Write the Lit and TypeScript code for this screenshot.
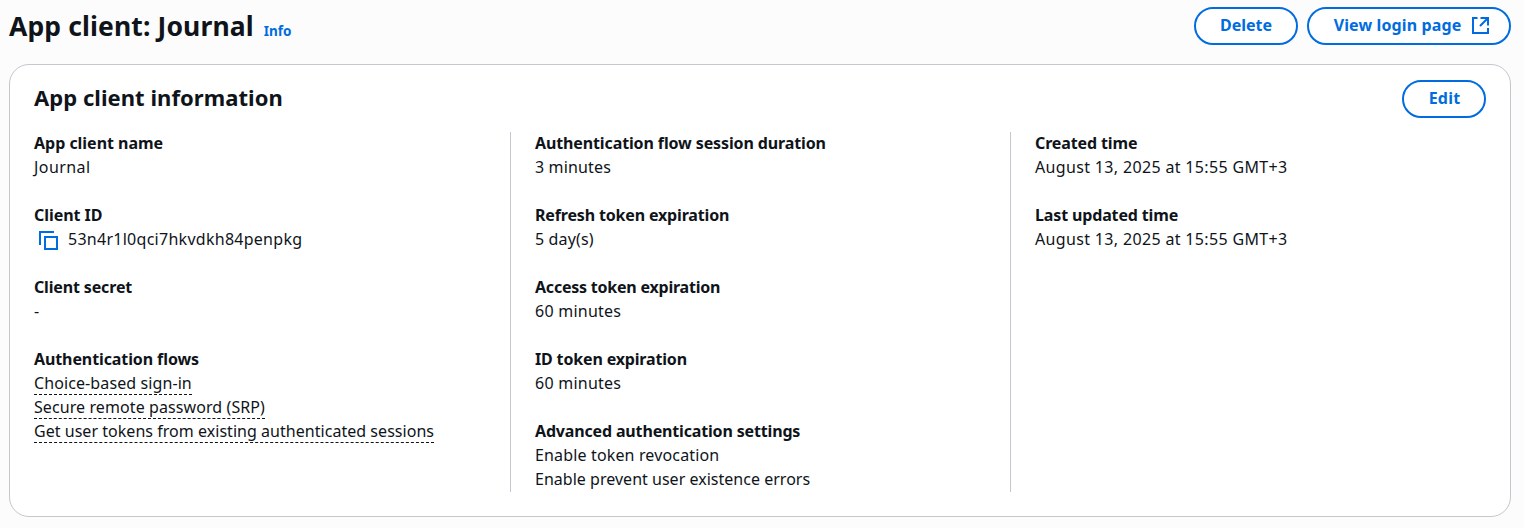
import { LitElement, html, css } from "lit";

type Run = [text: string, tracking: number];
interface Field {
  label: Run;
  values: Run[];
  kind?: "copy" | "hint";
}

const columns: Field[][] = [
  [
    { label: ["App client name", -0.02], values: [["Journal", 0.42]] },
    { label: ["Client ID", -0.05], values: [["53n4r1l0qci7hkvdkh84penpkg", 0.27]], kind: "copy" },
    { label: ["Client secret", -0.15], values: [["-", 0]] },
    {
      label: ["Authentication flows", -0.1],
      values: [
        ["Choice-based sign-in", 0.1],
        ["Secure remote password (SRP)", 0.09],
        ["Get user tokens from existing authenticated sessions", 0.035],
      ],
      kind: "hint",
    },
  ],
  [
    { label: ["Authentication flow session duration", -0.12], values: [["3 minutes", 0.15]] },
    { label: ["Refresh token expiration", -0.16], values: [["5 day(s)", 0.15]] },
    { label: ["Access token expiration", -0.22], values: [["60 minutes", 0.24]] },
    { label: ["ID token expiration", -0.16], values: [["60 minutes", 0.24]] },
    {
      label: ["Advanced authentication settings", -0.16],
      values: [["Enable token revocation", 0.15], ["Enable prevent user existence errors", 0.02]],
    },
  ],
  [
    { label: ["Created time", -0.12], values: [["August 13, 2025 at 15:55 GMT+3", 0.34]] },
    { label: ["Last updated time", -0.14], values: [["August 13, 2025 at 15:55 GMT+3", 0.34]] },
  ],
];

const run = ([text, tracking]: Run, cls = "") =>
  html`<span class=${cls} style=${`letter-spacing:${tracking}px`}>${text}</span>`;

class AppRoot extends LitElement {
  static styles = css`
    :host {
      display: flex;
      flex-direction: column;
      box-sizing: border-box;
      height: 528px;
      padding: 7px 13px 11px 9px;
      background: #fcfcfd;
      color: #0f141a;
      font: 400 16px/24px "Noto Sans", sans-serif;
      white-space: nowrap;
      overflow: hidden;
    }
    .top { display: flex; justify-content: space-between; height: 57px; }
    .heading { display: flex; align-items: baseline; gap: 10px; height: 38px; }
    h1, h2 { margin: 0; font-weight: 700; }
    h1 { font-size: 26.5px; line-height: 38px; letter-spacing: 0.12px; }
    h2 { font-size: 22px; line-height: 34px; letter-spacing: 0.05px; }
    .info { color: #006ce0; font-size: 13.5px; font-weight: 700; }
    .actions { display: flex; gap: 9px; }
    button {
      display: flex;
      align-items: center;
      justify-content: center;
      gap: 11px;
      box-sizing: border-box;
      height: 38px;
      padding: 0 0 2px;
      border: 2px solid #006ce0;
      border-radius: 20px;
      background: #fff;
      color: #006ce0;
      font: 700 16px/24px "Noto Sans", sans-serif;
    }
    .delete { width: 104px; }
    .login { width: 204px; padding-left: 5px; }
    .edit { width: 84px; padding-left: 1px; letter-spacing: 0.2px; }
    .external { width: 17px; height: 17px; margin-top: 1px; }
    .card {
      flex: 1;
      box-sizing: border-box;
      padding: 15px 24px 0;
      border: 1px solid #c6c6cd;
      border-radius: 20px;
      background: #fff;
    }
    .cardhead { display: flex; justify-content: space-between; height: 52px; }
    .columns { display: grid; grid-template-columns: 476px 500px 1fr; height: 360px; }
    .column { display: flex; flex-direction: column; gap: 24px; }
    .column + .column { border-left: 1px solid #c6c6cd; padding-left: 24px; }
    .label { display: block; font-weight: 700; height: 23px; line-height: 23px; }
    .value { display: flex; align-items: center; height: 24px; }
    .field { padding-bottom: 1px; }
    .copy { width: 20px; height: 20px; margin: 2px 10px 0 4px; }
    .hint { border-bottom: 1px dashed #0f141a; height: 23px; line-height: 25px; }
    svg { display: block; fill: none; stroke: #006ce0; stroke-width: 2; }
  `;

  private field(f: Field) {
    return html`<div class="field">
      ${run(f.label, "label")}
      ${f.values.map(
        (v) => html`<div class="value">
          ${f.kind === "copy"
            ? html`<svg class="copy" viewBox="0 0 20 20"><path d="M2 15V2H16M7 7H19V19H7Z" /></svg>`
            : null}${run(v, f.kind === "hint" ? "hint" : "")}
        </div>`
      )}
    </div>`;
  }

  render() {
    return html`
      <div class="top">
        <div class="heading"><h1>App client: Journal</h1><span class="info">Info</span></div>
        <div class="actions">
          <button class="delete">Delete</button>
          <button class="login">
            ${run(["View login page", 0.12])}
            <svg class="external" viewBox="0 0 17 17">
              <path d="M5.5 1H1V16H16V11M8.5 1H16V8.5M16 1L8 9" />
            </svg>
          </button>
        </div>
      </div>
      <section class="card">
        <div class="cardhead">
          <h2>App client information</h2>
          <button class="edit">Edit</button>
        </div>
        <div class="columns">
          ${columns.map((c) => html`<div class="column">${c.map((f) => this.field(f))}</div>`)}
        </div>
      </section>
    `;
  }
}
customElements.define("app-root", AppRoot);
